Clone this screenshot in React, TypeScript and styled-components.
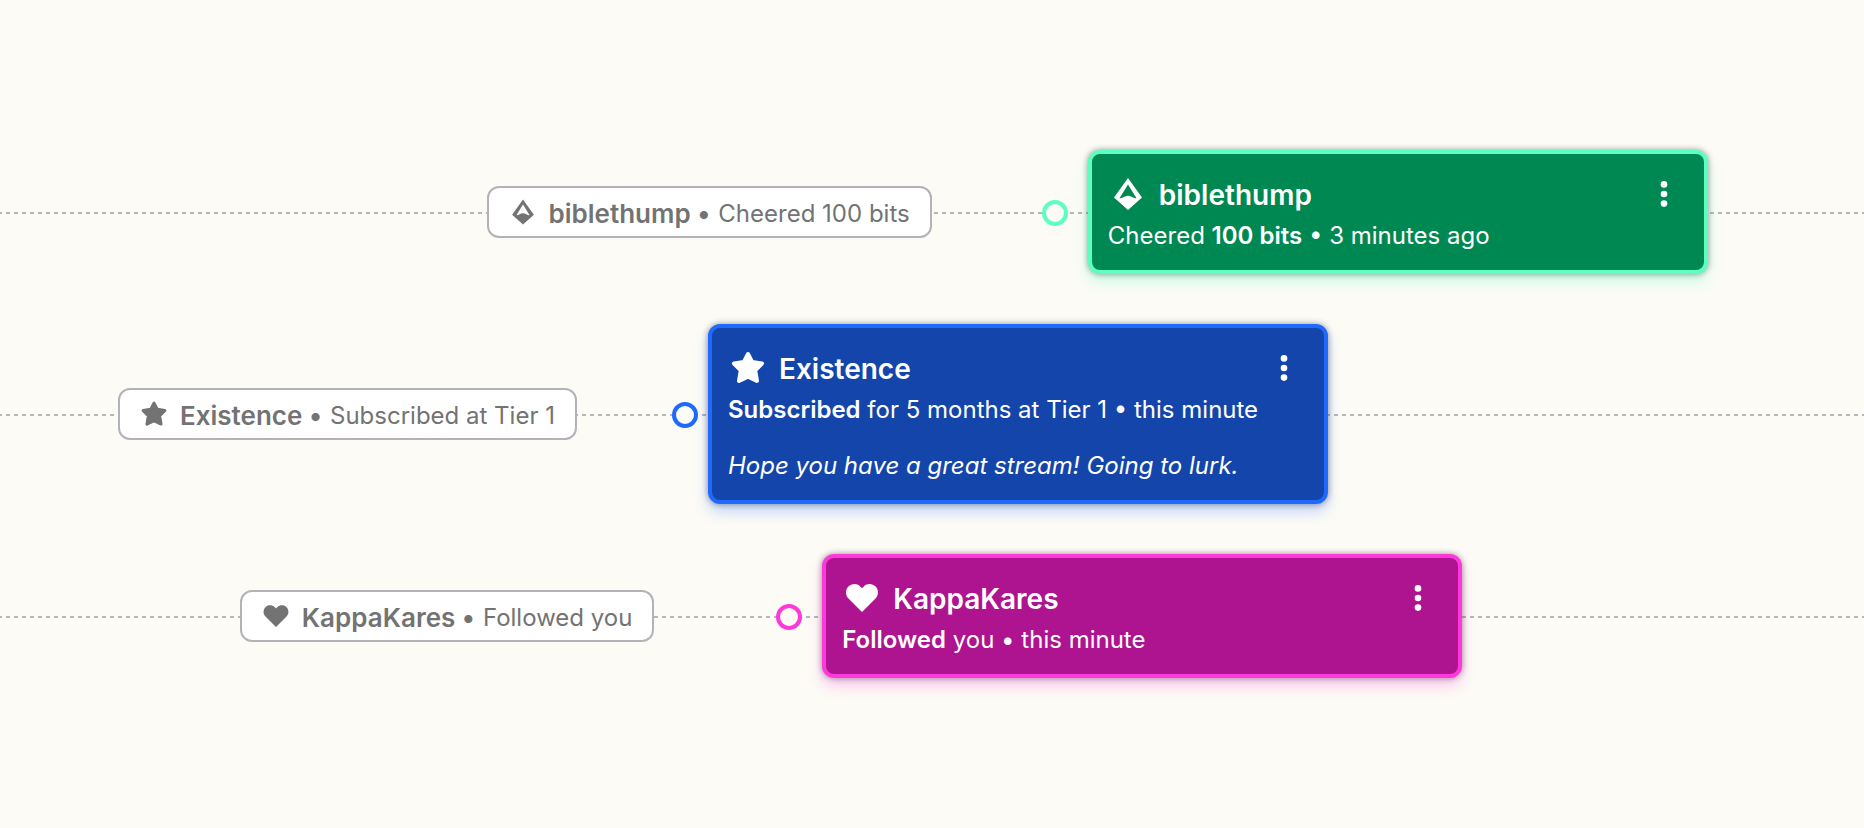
import React from "react";
import styled, { createGlobalStyle } from "styled-components";

const GlobalStyle = createGlobalStyle`
  *, *::before, *::after { box-sizing: border-box; }
  body {
    margin: 0;
    background: #fcfbf6;
    font-family: Inter, "Liberation Sans", sans-serif;
    -webkit-font-smoothing: antialiased;
  }
`;

const Page = styled.main`
  min-height: 100vh;
  display: flex;
  flex-direction: column;
  justify-content: center;
`;

const Track = styled.section<{ $columns: string }>`
  display: grid;
  grid-template-columns: ${(p) => p.$columns};
  align-items: center;
  min-height: 202px;
  background: repeating-linear-gradient(90deg, #b6b5ba 0 4px, transparent 4px 8px) 6px 101px / 1600% 2px repeat-x;
`;

const Pill = styled.div`
  grid-column: 2;
  display: flex;
  align-items: center;
  height: 52px;
  padding: 0 20px;
  border: 2px solid #b3b2b9;
  border-radius: 12px;
  background: #ffffff;
  color: #737373;
  white-space: nowrap;
`;

const PillIcon = styled.svg`
  width: 28px;
  height: 28px;
  margin-right: 12px;
  fill: currentColor;
  stroke: currentColor;
`;

const PillName = styled.strong`
  padding-top: 3px;
  font-size: 26px;
  line-height: 32px;
  font-weight: 600;
`;

const PillText = styled.span`
  padding-top: 3px;
  margin-left: 8px;
  font-size: 24px;
  line-height: 32px;
`;

const Marker = styled.span<{ $color: string }>`
  grid-column: 4;
  width: 26px;
  height: 26px;
  margin-top: 2px;
  border: 4px solid ${(p) => p.$color};
  border-radius: 50%;
  background: #fcfbf6;
`;

const Card = styled.article<{ $fill: string; $edge: string; $glow: string }>`
  grid-column: 6;
  padding: 22px 16px 18px;
  border: 4px solid ${(p) => p.$edge};
  border-radius: 12px;
  background: ${(p) => p.$fill};
  box-shadow: 0 0 6px rgba(0, 0, 0, 0.4), 0 8px 14px ${(p) => p.$glow};
  color: #ffffff;
`;

const CardHeader = styled.header`
  display: flex;
  align-items: center;
  height: 36px;
`;

const CardIcon = styled.svg`
  width: 36px;
  height: 36px;
  margin: 0 13px 0 2px;
  fill: currentColor;
  stroke: currentColor;
`;

const CardTitle = styled.h2`
  flex: 1;
  margin: 0;
  padding-top: 2px;
  font-size: 28px;
  line-height: 36px;
  font-weight: 600;
`;

const MenuButton = styled.button`
  display: flex;
  justify-content: center;
  align-items: center;
  width: 48px;
  height: 36px;
  padding: 0;
  border: 0;
  background: none;
  color: inherit;
  cursor: pointer;
`;

const CardText = styled.p`
  margin: 8px 0 0;
  font-size: 24px;
  line-height: 32px;

  strong { font-weight: 600; }
`;

const CardMessage = styled.p`
  margin: 24px 0 0;
  font-size: 24px;
  line-height: 32px;
  font-style: italic;
`;

type IconKind = "bits" | "star" | "heart";

function Shape({ kind }: { kind: IconKind }) {
  if (kind === "bits")
    return (
      <path
        stroke="none"
        fillRule="evenodd"
        d="M18 2 32 21.500 18 34 4 21.500ZM18 8.500 9.500 22.300C13 22.300 14.500 19.700 18 19.700S23 22.300 26.500 22.300Z"
      />
    );
  if (kind === "star")
    return (
      <path
        strokeWidth="4"
        strokeLinejoin="round"
        d="M18 4 22.100 12 32 13.500 25.200 20.300 27 30.900 18 26.600 9 30.900 10.800 20.300 4 13.500 13.900 12Z"
      />
    );
  return (
    <path
      stroke="none"
      d="M18 32 4.500 18.600C1.200 15.200 1.200 9.900 4.400 6.600 7.600 3.200 13 3.200 16.200 6.400L18 8.200 19.800 6.400C23 3.200 28.400 3.200 31.600 6.600 34.800 9.900 34.800 15.200 31.500 18.600Z"
    />
  );
}

interface StreamEvent {
  icon: IconKind;
  name: string;
  summary: string;
  detail: React.ReactNode;
  message?: string;
  columns: string;
  fill: string;
  edge: string;
  glow: string;
}

const events: StreamEvent[] = [
  {
    icon: "bits",
    name: "biblethump",
    summary: "Cheered 100 bits",
    detail: <>Cheered <strong>100 bits</strong> • 3 minutes ago</>,
    columns: "486fr auto 110fr 26px 20px 620px 156fr",
    fill: "#008852",
    edge: "#5cffbe",
    glow: "rgba(92, 255, 190, 0.3)",
  },
  {
    icon: "star",
    name: "Existence",
    summary: "Subscribed at Tier 1",
    detail: <><strong>Subscribed</strong> for 5 months at Tier 1 • this minute</>,
    message: "Hope you have a great stream! Going to lurk.",
    columns: "118fr auto 95fr 26px 10px 620px 536fr",
    fill: "#1445ab",
    edge: "#1f69ff",
    glow: "rgba(31, 105, 255, 0.25)",
  },
  {
    icon: "heart",
    name: "KappaKares",
    summary: "Followed you",
    detail: <><strong>Followed</strong> you • this minute</>,
    columns: "240fr auto 122fr 26px 20px 640px 402fr",
    fill: "#ae1390",
    edge: "#ff38db",
    glow: "rgba(255, 56, 219, 0.25)",
  },
];

export default function App() {
  return (
    <>
      <GlobalStyle />
      <Page>
        {events.map((e) => (
          <Track key={e.name} $columns={e.columns}>
            <Pill>
              <PillIcon viewBox="0 0 36 36" aria-hidden="true"><Shape kind={e.icon} /></PillIcon>
              <PillName>{e.name} •</PillName>
              <PillText>{e.summary}</PillText>
            </Pill>
            <Marker $color={e.edge} />
            <Card $fill={e.fill} $edge={e.edge} $glow={e.glow}>
              <CardHeader>
                <CardIcon viewBox="0 0 36 36" aria-hidden="true"><Shape kind={e.icon} /></CardIcon>
                <CardTitle>{e.name}</CardTitle>
                <MenuButton type="button" aria-label={`Options for ${e.name}`}>
                  <svg width="8" height="26" viewBox="0 0 8 26" fill="currentColor" aria-hidden="true">
                    <circle cx="4" cy="3.400" r="3.300" />
                    <circle cx="4" cy="13" r="3.300" />
                    <circle cx="4" cy="22.600" r="3.300" />
                  </svg>
                </MenuButton>
              </CardHeader>
              <CardText>{e.detail}</CardText>
              {e.message && <CardMessage>{e.message}</CardMessage>}
            </Card>
          </Track>
        ))}
      </Page>
    </>
  );
}
